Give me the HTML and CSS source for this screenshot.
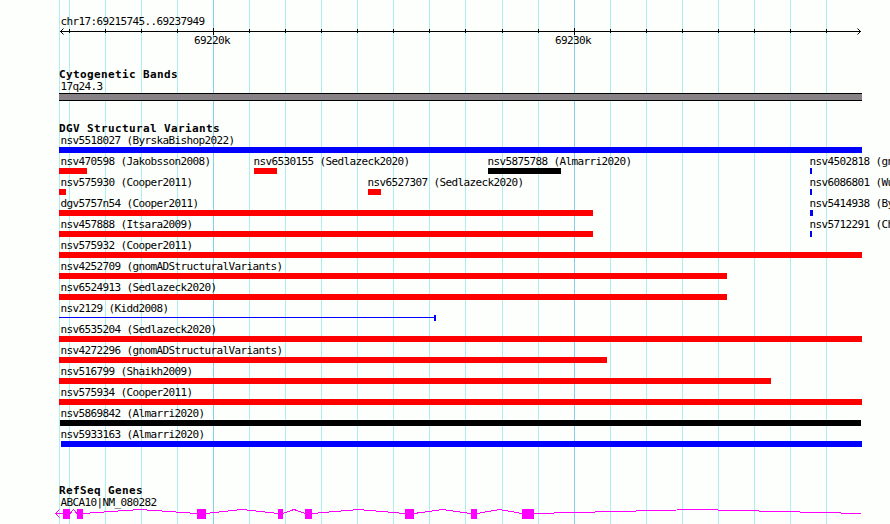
FILE: index.html
```
<!DOCTYPE html>
<html>
  <head>
    <meta charset="utf-8">
    <title>chr17:69215745..69237949</title>
    <link rel="stylesheet" href="styles.css">
  </head>
  <body>
    <div class="browser">
      <!-- grid lines behind all the tracks -->
      <svg class="grid" width="890" height="524" shape-rendering="crispEdges">
        <path class="minor" d="M59.5 0V524M69.5 0V524M105.5 0V524M141.5 0V524M177.5 0V524M249.5 0V524M285.5 0V524M321.5 0V524M357.5 0V524M393.5 0V524M429.5 0V524M465.5 0V524M502.5 0V524M538.5 0V524M610.5 0V524M646.5 0V524M682.5 0V524M718.5 0V524M754.5 0V524M790.5 0V524M826.5 0V524"/>
        <path class="major" d="M213.5 0V524M574.5 0V524"/>
      </svg>

      <div class="ruler">
        <div class="label">chr17:69215745..69237949</div>
        <svg class="scale" width="890" height="8" shape-rendering="crispEdges">
          <path d="M60 3.5H861M69.5 1V5M105.5 1V5M141.5 1V5M177.5 1V5M213.5 0V7M249.5 1V5M285.5 1V5M321.5 1V5M357.5 1V5M393.5 1V5M429.5 1V5M465.5 1V5M502.5 1V5M538.5 1V5M574.5 0V7M610.5 1V5M646.5 1V5M682.5 1V5M718.5 1V5M754.5 1V5M790.5 1V5M826.5 1V5"/>
          <path shape-rendering="auto" d="M63.5 .5L60.5 3.5L63.5 6.5M857.5 .5L860.5 3.5L857.5 6.5"/>
        </svg>
        <div class="numbers"><span>69220k</span><span>69230k</span></div>
      </div>

      <div class="track bands">
        <h2>Cytogenetic Bands</h2>
        <div class="label">17q24.3</div>
        <div class="band"></div>
      </div>

      <div class="track variants">
        <h2>DGV Structural Variants</h2>
        <div id="rows"></div>
      </div>

      <div class="track genes">
        <h2>RefSeq Genes</h2>
        <div class="label">ABCA10|NM_080282</div>
        <svg class="gene" width="890" height="12" shape-rendering="crispEdges">
          <path class="intron" d="M55 5.5H63M70 5.5L73.5 1.5L77 5.5M83 5.5L140 1.5L197 5.5M206 5.5L242 1.5L278 5.5M283 5.5L294 1.5L305 5.5M312 5.5L358.5 1.5L405 5.5M414 5.5L442.5 1.5L471 5.5M477 5.5L499.5 1.5L522 5.5M534 5.5L697.5 1.5L861 5.5"/>
          <path class="intron" shape-rendering="auto" d="M59.5 1.5L55.5 5.5L59.5 9.5"/>
          <path class="exon" d="M63 1h7v10h-7zM77 1h6v10h-6zM197 1h9v10h-9zM278 1h5v10h-5zM305 1h7v10h-7zM405 1h9v10h-9zM471 1h6v10h-6zM522 1h12v10h-12z"/>
        </svg>
      </div>
    </div>

    <script>
      // each row: [name, start, end, colour]
      const rows = [
        [['nsv5518027 (ByrskaBishop2022)', 59, 862, 'blue']],
        [['nsv470598 (Jakobsson2008)', 59, 87, 'red'], ['nsv6530155 (Sedlazeck2020)', 254, 277, 'red'], ['nsv5875788 (Almarri2020)', 488, 561, 'black'], ['nsv4502818 (gnomADStructuralVariants)', 810, 812, 'blue']],
        [['nsv575930 (Cooper2011)', 59, 66, 'red'], ['nsv6527307 (Sedlazeck2020)', 368, 381, 'red'], ['nsv6086801 (Wu2021)', 810, 812, 'blue']],
        [['dgv5757n54 (Cooper2011)', 59, 593, 'red'], ['nsv5414938 (ByrskaBishop2022)', 810, 813, 'blue']],
        [['nsv457888 (Itsara2009)', 59, 593, 'red'], ['nsv5712291 (Chaisson2019)', 810, 812, 'blue']],
        [['nsv575932 (Cooper2011)', 59, 862, 'red']],
        [['nsv4252709 (gnomADStructuralVariants)', 59, 727, 'red']],
        [['nsv6524913 (Sedlazeck2020)', 59, 727, 'red']],
        [['nsv2129 (Kidd2008)', 59, 436, 'line']],
        [['nsv6535204 (Sedlazeck2020)', 59, 862, 'red']],
        [['nsv4272296 (gnomADStructuralVariants)', 59, 607, 'red']],
        [['nsv516799 (Shaikh2009)', 59, 771, 'red']],
        [['nsv575934 (Cooper2011)', 59, 862, 'red']],
        [['nsv5869842 (Almarri2020)', 60, 861, 'black']],
        [['nsv5933163 (Almarri2020)', 61, 862, 'blue']]
      ];

      const rowsDiv = document.getElementById('rows');
      rows.forEach(row => {
        const rowDiv = document.createElement('div');
        rowDiv.classList.add('row');
        row.forEach(([name, start, end, colour]) => {
          const labelX = Math.max(start - 0.6, 60.4);
          rowDiv.innerHTML += `
            <div class="feature">
              <div class="label" style="margin-left: ${labelX}px">${name}</div>
              <div class="bar ${colour}" style="margin-left: ${start}px; width: ${end - start}px"></div>
            </div>`;
        });
        rowsDiv.appendChild(rowDiv);
      });
    </script>
  </body>
</html>
```
FILE: styles.css
```
body {
  background-color: #fdfffc;
  color: black;
  font-family: "DejaVu Sans Mono", monospace;
  margin: 0;
  overflow: hidden;
}

.browser {
  position: relative;
  width: 890px;
  height: 524px;
  overflow: hidden;
}

.grid {
  position: absolute;
  top: 0;
  left: 0;
  z-index: -1;
}

.grid path {
  fill: none;
}

.minor {
  stroke: #afeeee;
}

.major {
  stroke: #87ceeb;
}

svg {
  display: block;
}

h2 {
  font-size: 11px;
  font-weight: bold;
  letter-spacing: 0.378px;
  line-height: 13px;
  height: 12px;
  margin: 0 0 0 59px;
}

.label {
  font-size: 11px;
  letter-spacing: -0.622px;
  line-height: 17px;
  height: 15px;
  margin-left: 60.4px;
  white-space: nowrap;
}

.ruler {
  padding-top: 13px;
  height: 55px;
}

.scale path {
  fill: none;
  stroke: black;
}

.numbers {
  display: grid;
  grid-template-columns: 361px 100px;
  font-size: 11px;
  letter-spacing: -0.622px;
  line-height: 9px;
  margin-left: 194px;
}

.bands {
  height: 54px;
}

.bands h2 {
  margin-bottom: -2px;
}

.band {
  background-color: #868286;
  border-top: 1px solid black;
  border-bottom: 1px solid black;
  width: 803px;
  height: 6px;
  margin-left: 59px;
}

.variants {
  height: 362px;
}

.variants h2 {
  margin-bottom: -2px;
}

.row {
  display: grid;
  height: 21px;
}

.feature {
  grid-area: 1 / 1;
}

.bar {
  height: 6px;
}

.red {
  background-color: red;
}

.blue {
  background-color: blue;
}

.black {
  background-color: black;
}

.line {
  box-sizing: border-box;
  border-right: 2px solid blue;
  background: linear-gradient(blue, blue) 0 2px / 100% 1px no-repeat;
}

.genes h2 {
  margin-bottom: -3px;
}

.genes .label {
  line-height: 19px;
}

.intron {
  fill: none;
  stroke: magenta;
}

.exon {
  fill: magenta;
}
```
